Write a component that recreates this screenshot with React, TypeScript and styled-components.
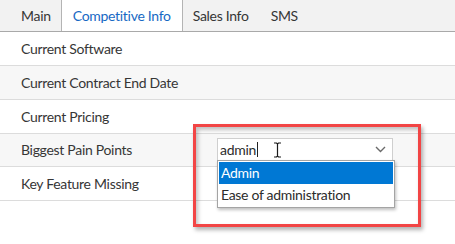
import React from 'react';
import styled, { createGlobalStyle } from 'styled-components';

const GlobalStyle = createGlobalStyle`
  html, body {
    margin: 0;
    padding: 0;
    background: #ffffff;
  }
  body {
    font-family: Lato, 'Liberation Sans', sans-serif;
    letter-spacing: -0.3px;
    color: #363636;
  }
`;

const Page = styled.div`
  position: relative;
  width: 455px;
  height: 244px;
  overflow: hidden;
  background: #ffffff;
`;

const TabBar = styled.div`
  display: flex;
  height: 31px;
  padding-left: 10px;
  background: #f2f2f2;
  border-bottom: 1px solid #a9a9a9;
`;

const Tab = styled.div<{ $active?: boolean }>`
  display: flex;
  align-items: center;
  padding: 0 11px;
  font-size: 14px;
  color: ${(p) => (p.$active ? '#1769c4' : '#363636')};
  background: ${(p) => (p.$active ? '#ffffff' : 'transparent')};
  border-left: ${(p) => (p.$active ? '1px solid #b4b4b4' : 'none')};
  border-right: ${(p) => (p.$active ? '1px solid #b4b4b4' : 'none')};
  margin: ${(p) => (p.$active ? '0 -1px' : '0')};
`;

const Row = styled.div<{ $striped?: boolean }>`
  display: grid;
  grid-template-columns: 217px 1fr;
  align-items: center;
  height: 33px;
  border-bottom: 1px solid #dcdcdc;
  background: ${(p) => (p.$striped ? '#f7f7f7' : '#ffffff')};
  font-size: 14px;
  &:nth-child(odd) {
    height: 32.5px;
  }
`;

const Label = styled.div`
  padding-left: 21px;
  color: #363636;
`;

const Combo = styled.div`
  position: relative;
  width: 176px;
  z-index: 2;
`;

const Input = styled.div`
  display: flex;
  align-items: center;
  height: 21px;
  padding: 0 6px 0 2px;
  background: #ffffff;
  border: 1px solid #cfcfcf;
  font-size: 14px;
  color: #2c2c2c;
`;

const Caret = styled.span`
  display: inline-block;
  width: 1px;
  height: 15px;
  margin-left: 1px;
  background: #222222;
`;

const IBeam = styled.svg`
  margin-left: 15px;
`;

const Chevron = styled.svg`
  margin-left: auto;
`;

const List = styled.div`
  position: absolute;
  left: 0;
  top: 22px;
  width: 174px;
  padding: 1px;
  background: #ffffff;
  border: 1px solid #a4a4a4;
  box-shadow: 1px 2px 3px rgba(0, 0, 0, 0.25);
`;

const Option = styled.div<{ $selected?: boolean }>`
  height: 22px;
  line-height: 22px;
  padding-left: 2px;
  font-size: 14px;
  color: ${(p) => (p.$selected ? '#ffffff' : '#2c2c2c')};
  background: ${(p) => (p.$selected ? '#0078d4' : 'transparent')};
`;

const Highlight = styled.div`
  position: absolute;
  left: 193px;
  top: 124px;
  width: 222px;
  height: 97px;
  border: 3px solid #f24545;
  box-shadow: 2px 3px 4px rgba(0, 0, 0, 0.3), inset 2px 3px 4px rgba(0, 0, 0, 0.25);
  pointer-events: none;
  z-index: 3;
`;

const tabs = ['Main', 'Competitive Info', 'Sales Info', 'SMS'];
const fields = [
  'Current Software',
  'Current Contract End Date',
  'Current Pricing',
  'Biggest Pain Points',
  'Key Feature Missing',
];

export default function App() {
  return (
    <Page>
      <GlobalStyle />
      <TabBar>
        {tabs.map((t) => (
          <Tab key={t} $active={t === 'Competitive Info'}>
            {t}
          </Tab>
        ))}
      </TabBar>
      {fields.map((f, i) => (
        <Row key={f} $striped={i % 2 === 1}>
          <Label>{f}</Label>
          {f === 'Biggest Pain Points' && (
            <Combo>
              <Input>
                admin
                <Caret />
                <IBeam width="9" height="16" viewBox="0 0 9 16">
                  <path
                    d="M1 1h2.5L4.5 2l1-1H8M4.5 2v12M1 15h2.5l1-1 1 1H8"
                    fill="none"
                    stroke="#1a1a1a"
                    strokeWidth="1.2"
                  />
                </IBeam>
                <Chevron width="11" height="7" viewBox="0 0 11 7">
                  <path d="M1 1l4.5 4.5L10 1" fill="none" stroke="#6a6a6a" strokeWidth="1.4" />
                </Chevron>
              </Input>
              <List>
                <Option $selected>Admin</Option>
                <Option>Ease of administration</Option>
              </List>
            </Combo>
          )}
        </Row>
      ))}
      <Highlight />
    </Page>
  );
}
